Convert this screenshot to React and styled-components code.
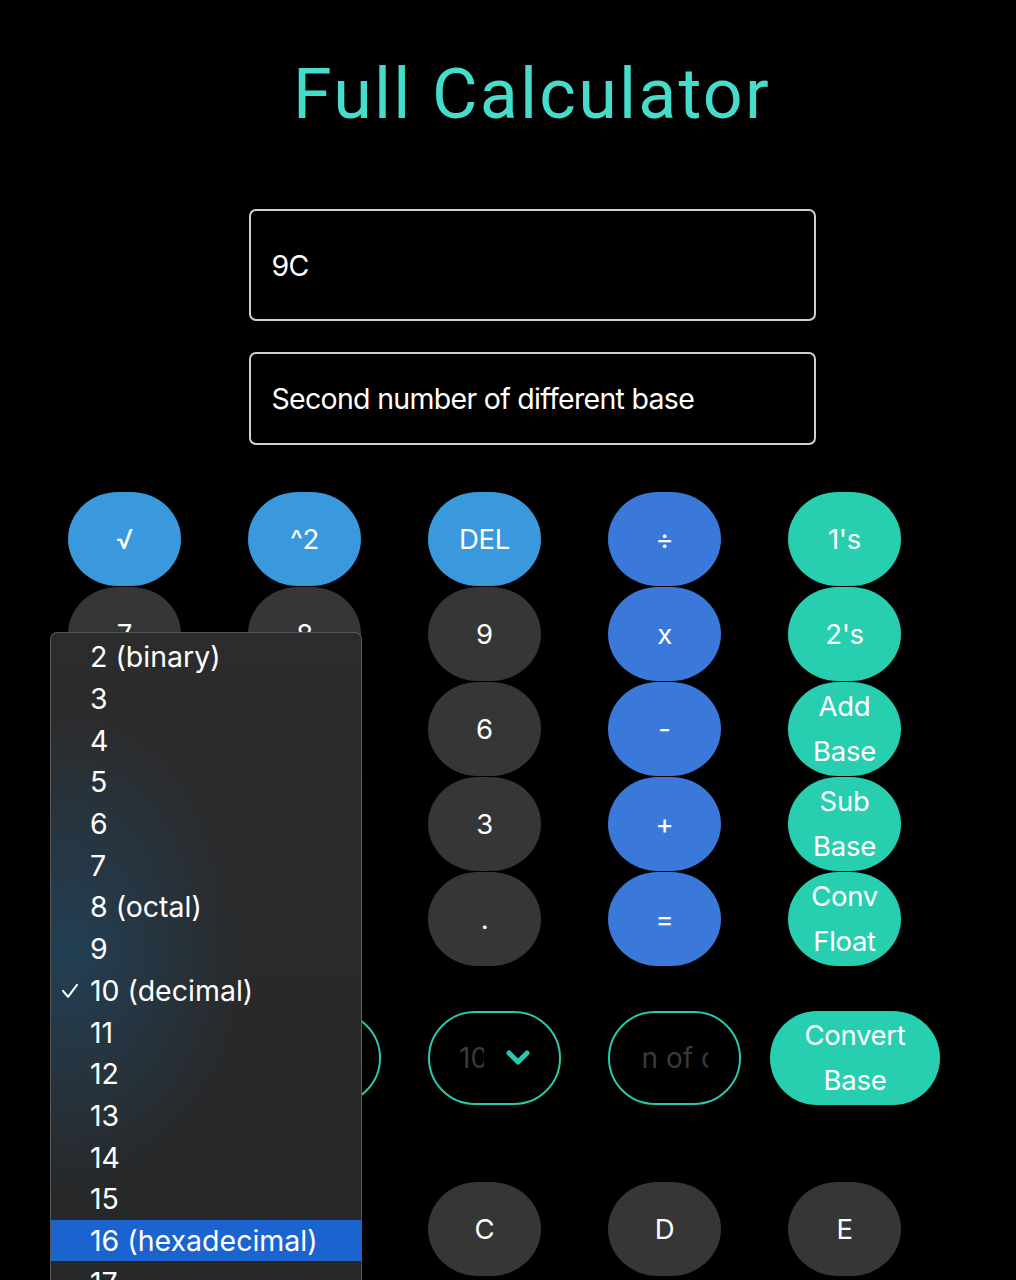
import React from "react";
import styled, { createGlobalStyle } from "styled-components";

const Global = createGlobalStyle`
  html, body { margin: 0; padding: 0; background: #000; }
  body { font-family: "Inter", "Noto Sans", sans-serif; color: #fff; overflow: hidden; }
`;

const Page = styled.div`
  position: relative;
  width: 1016px;
  height: 1280px;
  overflow: hidden;
  background: #000;
`;

const Header = styled.div`
  display: flex;
  flex-direction: column;
  align-items: center;
  padding: 52px 0 0 48px;
`;

const Title = styled.h1`
  margin: 0;
  font-family: "Roboto", "Inter", sans-serif;
  font-weight: 400;
  font-size: 70px;
  line-height: 84px;
  letter-spacing: 2.2px;
  color: #45dccb;
`;

const Field = styled.div`
  box-sizing: border-box;
  width: 567px;
  height: ${(p) => p.$h}px;
  margin-top: ${(p) => p.$mt}px;
  border: 2px solid #d0d0d0;
  border-radius: 7px;
  display: flex;
  align-items: center;
  padding-left: 21px;
  font-size: 28.5px;
  letter-spacing: -0.7px;
  color: #fff;
`;

const Grid = styled.div`
  display: grid;
  grid-template-columns: repeat(5, 180px);
  grid-auto-rows: 94px;
  row-gap: 1px;
  padding-left: 68px;
  margin-top: 47px;
`;

const Key = styled.div`
  box-sizing: border-box;
  width: 113px;
  height: 94px;
  border-radius: 50px / 47px;
  background: ${(p) => p.$bg};
  display: flex;
  align-items: center;
  justify-content: center;
  text-align: center;
  padding: 0 10px;
  font-size: 27.5px;
  line-height: 45px;
  letter-spacing: -0.3px;
  color: #fff;
`;

const Controls = styled.div`
  display: grid;
  grid-template-columns: repeat(5, 180px);
  padding-left: 68px;
  margin-top: 45px;
  height: 94px;
`;

const Pill = styled.div`
  box-sizing: border-box;
  width: 133px;
  height: 94px;
  border: 2px solid #2bc8ad;
  border-radius: 47px;
  display: flex;
  align-items: center;
  justify-content: center;
  gap: ${(p) => (p.$gap ? p.$gap : 0)}px;
  overflow: hidden;
  font-size: 28px;
  color: #3a3a3a;
`;

const Clip = styled.span`
  width: ${(p) => p.$w}px;
  overflow: hidden;
  white-space: nowrap;
  display: flex;
  justify-content: flex-start;
`;

const ConvertKey = styled(Key)`
  width: 170px;
  margin-left: -18px;
  border-radius: 47px;
  padding: 0 20px;
`;

const HexGrid = styled(Grid)`
  margin-top: 77px;
`;

const Menu = styled.div`
  position: absolute;
  left: 50px;
  top: 632px;
  width: 312px;
  height: 700px;
  box-sizing: border-box;
  border: 1px solid rgba(255, 255, 255, 0.22);
  border-radius: 7px;
  background:
    radial-gradient(ellipse 170px 240px at 20px 320px, rgba(32, 72, 102, 0.7), rgba(32, 72, 102, 0) 100%),
    linear-gradient(180deg, #2c2c2d 0%, #262728 100%);
  padding-top: 3px;
  display: flex;
  flex-direction: column;
`;

const Item = styled.div`
  position: relative;
  height: 41.7px;
  display: flex;
  align-items: center;
  padding-left: 39px;
  font-size: 28.5px;
  color: #fff;
  background: ${(p) => (p.$active ? "#1b64cf" : "transparent")};
`;

const Check = styled.svg`
  position: absolute;
  left: 10px;
  top: 50%;
  transform: translateY(-45%);
`;

const Chevron = () => (
  <svg width="24" height="16" viewBox="0 0 24 16">
    <polyline points="3,3 12,12 21,3" fill="none" stroke="#2bc8ad" strokeWidth="5" strokeLinecap="round" strokeLinejoin="round" />
  </svg>
);

const LIGHT = "#3a98dc";
const BLUE = "#3a79d9";
const TEAL = "#27cfb0";
const GRAY = "#363636";

const keys = [
  ["√", LIGHT], ["^2", LIGHT], ["DEL", LIGHT], ["÷", BLUE], ["1's", TEAL],
  ["7", GRAY], ["8", GRAY], ["9", GRAY], ["x", BLUE], ["2's", TEAL],
  ["4", GRAY], ["5", GRAY], ["6", GRAY], ["-", BLUE], ["Add Base", TEAL],
  ["1", GRAY], ["2", GRAY], ["3", GRAY], ["+", BLUE], ["Sub Base", TEAL],
  ["0", GRAY], ["00", GRAY], [".", GRAY], ["=", BLUE], ["Conv Float", TEAL],
];

const hex = ["A", "B", "C", "D", "E", "F", "", "", "", ""];

const options = [
  "2 (binary)", "3", "4", "5", "6", "7", "8 (octal)", "9", "10 (decimal)",
  "11", "12", "13", "14", "15", "16 (hexadecimal)", "17",
];

export default function App() {
  return (
    <Page>
      <Global />
      <Header>
        <Title>Full Calculator</Title>
        <Field $h={112} $mt={73}>9C</Field>
        <Field $h={93} $mt={31}>Second number of different base</Field>
      </Header>
      <Grid>
        {keys.map(([t, c], i) => (
          <Key key={i} $bg={c}>{t}</Key>
        ))}
      </Grid>
      <Controls>
        <Pill $gap={22}><Clip $w={25}>10</Clip><Chevron /></Pill>
        <Pill $gap={22}><Clip $w={25}>10</Clip><Chevron /></Pill>
        <Pill $gap={22}><Clip $w={25}>10</Clip><Chevron /></Pill>
        <Pill><Clip $w={66}>n of co</Clip></Pill>
        <ConvertKey $bg={TEAL}>Convert Base</ConvertKey>
      </Controls>
      <HexGrid>
        {hex.map((t, i) => (t ? <Key key={i} $bg={GRAY}>{t}</Key> : <div key={i} />))}
      </HexGrid>
      <Menu>
        {options.map((o) => (
          <Item key={o} $active={o.startsWith("16")}>
            {o === "10 (decimal)" && (
              <Check width="18" height="16" viewBox="0 0 18 16">
                <polyline points="2,8 7,14 16,2" fill="none" stroke="#fff" strokeWidth="2" strokeLinecap="round" strokeLinejoin="round" />
              </Check>
            )}
            {o}
          </Item>
        ))}
      </Menu>
    </Page>
  );
}
